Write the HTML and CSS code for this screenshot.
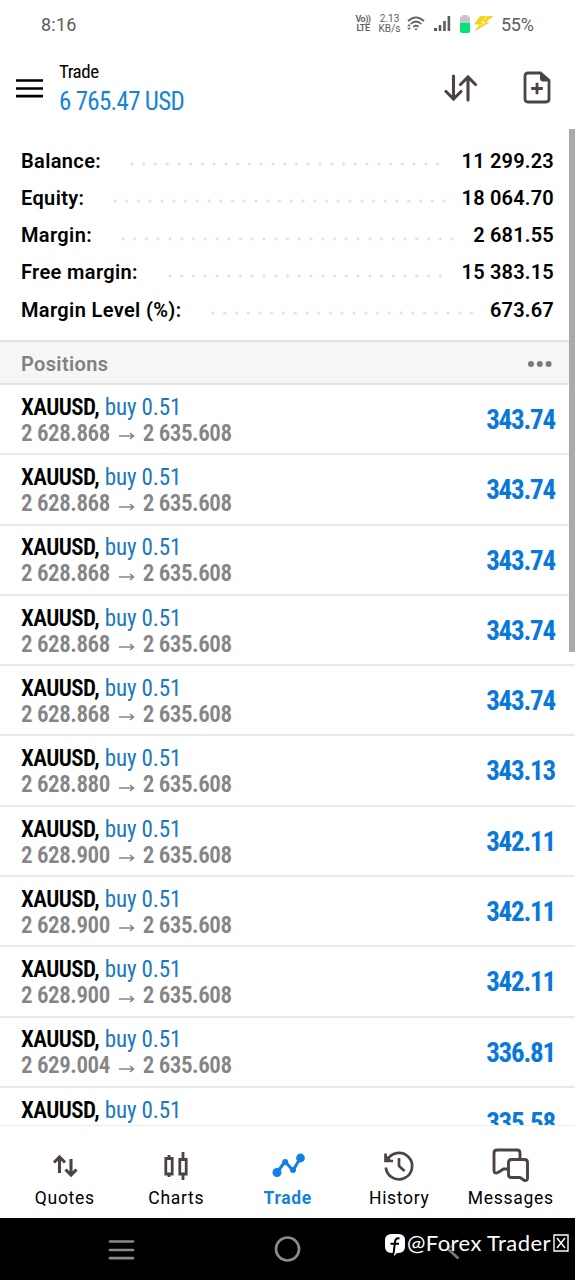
FILE: index.html
```
<!DOCTYPE html>
<html lang="en">
<head>
<meta charset="utf-8">
<title>Trade</title>
<link rel="stylesheet" href="styles.css">
</head>
<body>
<div class="screen">
  <div class="status">
    <span class="clock">8:16</span>
    <div class="status-icons">
      <span class="volte"><span>Vo))</span><span>LTE</span></span>
      <span class="speed"><span>2.13</span><span>KB/s</span></span>
      <svg class="wifi" width="18" height="16" viewBox="0 0 18 16" fill="none" stroke="#5c5c5c" stroke-width="1.7"><path d="M1 5.2Q9-2.6 17 5.2M3.7 8Q9 3 14.3 8M6.3 10.8Q9 8.400 11.7 10.8"/><path d="M7.3 12.6h3.4L9 14.6z" fill="#5c5c5c" stroke="none"/><path d="M.2 10.2L2 8l1.800 2.200zM.2 11.800L2 14l1.800-2.200z" fill="#5c5c5c" stroke="none"/></svg>
      <svg class="signal" width="17" height="16" viewBox="0 0 17 16" fill="#5c5c5c"><path d="M0 12h3v3H0zM4.700 9h2.600v6H4.700zM9.200 5h2.600v10H9.200zM13.600 0h2.600v15h-2.600z"/></svg>
      <svg class="battery" width="10" height="18" viewBox="0 0 10 18"><path d="M2.500 0h5v1.500H9Q10 1.500 10 3v12.500Q10 18 7.500 18h-5Q0 18 0 15.500V3q0-1.500 1-1.500h1.500z" fill="#c6c6c6"/><path d="M0 8h10v7.500Q10 18 7.500 18h-5Q0 18 0 15.500z" fill="#00e27a"/></svg>
      <svg class="bolt" width="20" height="16" viewBox="0 0 20 16"><path d="M6 0h13.500L12 6.200h4L0 15.800 5.500 8.500H0z" fill="#f3d321"/><path d="M12.500 0L7.500 6.500h3.500L6 10" stroke="#fff" stroke-width=".7" fill="none"/></svg>
      <span class="percent">55%</span>
    </div>
  </div>

  <header class="header">
    <svg class="menu" width="27" height="20" viewBox="0 0 27 20"><path d="M0 1.500h27M0 9.500h27M0 17.200h27" stroke="#000" stroke-width="2.700"/></svg>
    <div class="title"><span class="cond name">Trade</span><span class="cond profit">6 765.47 USD</span></div>
    <svg class="sort" width="34" height="28" viewBox="0 0 34 28" fill="none" stroke="#4d4442" stroke-width="3.100" stroke-linecap="round"><path d="M9.500 2v22M2 17.500l7.500 7.500 7.500-7.500M24 26V4M16.500 10.500L24 3l7.500 7.500"/></svg>
    <svg class="doc" width="28" height="34" viewBox="0 0 28 34" fill="none" stroke="#4d4442" stroke-width="2.800"><path d="M5 2h12.500L26 9.500V28q0 3-3 3H5q-3 0-3-3V5q0-3 3-3zM8.200 17.500h11.600M14 11.700v11.600"/><path d="M17 2v5.500q0 3 3 3h6z" fill="#4d4442" stroke="none"/></svg>
  </header>

  <main class="content">
    <section class="summary">
      <div class="sum balance"><span class="label">Balance:</span><i class="dots"></i><span class="value">11 299.23</span></div>
      <div class="sum equity"><span class="label">Equity:</span><i class="dots"></i><span class="value">18 064.70</span></div>
      <div class="sum margin"><span class="label">Margin:</span><i class="dots"></i><span class="value">2 681.55</span></div>
      <div class="sum free"><span class="label">Free margin:</span><i class="dots"></i><span class="value">15 383.15</span></div>
      <div class="sum level"><span class="label">Margin Level (%):</span><i class="dots"></i><span class="value">673.67</span></div>
    </section>
    <div class="section"><span>Positions</span><svg width="25" height="8" viewBox="0 0 25 8" fill="#7b7b7b"><circle cx="3" cy="4" r="3"/><circle cx="11.800" cy="4" r="3"/><circle cx="20.600" cy="4" r="3"/></svg></div>
    <section class="positions">
      <article class="row"><div class="info"><p class="cond symbol"><b>XAUUSD,</b> <span>buy 0.51</span></p><p class="cond prices"><span>2 628.868</span><svg class="arrow" viewBox="0 0 16 8"><path d="M0 4h14M11 1l3.500 3L11 7"/></svg><span>2 635.608</span></p></div><span class="cond gain">343.74</span></article>
      <article class="row"><div class="info"><p class="cond symbol"><b>XAUUSD,</b> <span>buy 0.51</span></p><p class="cond prices"><span>2 628.868</span><svg class="arrow" viewBox="0 0 16 8"><path d="M0 4h14M11 1l3.500 3L11 7"/></svg><span>2 635.608</span></p></div><span class="cond gain">343.74</span></article>
      <article class="row"><div class="info"><p class="cond symbol"><b>XAUUSD,</b> <span>buy 0.51</span></p><p class="cond prices"><span>2 628.868</span><svg class="arrow" viewBox="0 0 16 8"><path d="M0 4h14M11 1l3.500 3L11 7"/></svg><span>2 635.608</span></p></div><span class="cond gain">343.74</span></article>
      <article class="row"><div class="info"><p class="cond symbol"><b>XAUUSD,</b> <span>buy 0.51</span></p><p class="cond prices"><span>2 628.868</span><svg class="arrow" viewBox="0 0 16 8"><path d="M0 4h14M11 1l3.500 3L11 7"/></svg><span>2 635.608</span></p></div><span class="cond gain">343.74</span></article>
      <article class="row"><div class="info"><p class="cond symbol"><b>XAUUSD,</b> <span>buy 0.51</span></p><p class="cond prices"><span>2 628.868</span><svg class="arrow" viewBox="0 0 16 8"><path d="M0 4h14M11 1l3.500 3L11 7"/></svg><span>2 635.608</span></p></div><span class="cond gain">343.74</span></article>
      <article class="row"><div class="info"><p class="cond symbol"><b>XAUUSD,</b> <span>buy 0.51</span></p><p class="cond prices"><span>2 628.880</span><svg class="arrow" viewBox="0 0 16 8"><path d="M0 4h14M11 1l3.500 3L11 7"/></svg><span>2 635.608</span></p></div><span class="cond gain">343.13</span></article>
      <article class="row"><div class="info"><p class="cond symbol"><b>XAUUSD,</b> <span>buy 0.51</span></p><p class="cond prices"><span>2 628.900</span><svg class="arrow" viewBox="0 0 16 8"><path d="M0 4h14M11 1l3.500 3L11 7"/></svg><span>2 635.608</span></p></div><span class="cond gain">342.11</span></article>
      <article class="row"><div class="info"><p class="cond symbol"><b>XAUUSD,</b> <span>buy 0.51</span></p><p class="cond prices"><span>2 628.900</span><svg class="arrow" viewBox="0 0 16 8"><path d="M0 4h14M11 1l3.500 3L11 7"/></svg><span>2 635.608</span></p></div><span class="cond gain">342.11</span></article>
      <article class="row"><div class="info"><p class="cond symbol"><b>XAUUSD,</b> <span>buy 0.51</span></p><p class="cond prices"><span>2 628.900</span><svg class="arrow" viewBox="0 0 16 8"><path d="M0 4h14M11 1l3.500 3L11 7"/></svg><span>2 635.608</span></p></div><span class="cond gain">342.11</span></article>
      <article class="row"><div class="info"><p class="cond symbol"><b>XAUUSD,</b> <span>buy 0.51</span></p><p class="cond prices"><span>2 629.004</span><svg class="arrow" viewBox="0 0 16 8"><path d="M0 4h14M11 1l3.500 3L11 7"/></svg><span>2 635.608</span></p></div><span class="cond gain">336.81</span></article>
      <article class="row"><div class="info"><p class="cond symbol"><b>XAUUSD,</b> <span>buy 0.51</span></p></div><span class="cond gain">335.58</span></article>
    </section>
    <div class="scrollbar"></div>
  </main>

  <nav class="tabs">
    <a class="tab"><svg width="40" height="36" viewBox="0 0 40 36" fill="none" stroke="#4d4442" stroke-width="3.100"><path d="M14.500 26V11M9 15.500l5.500-5.500 5.500 5.500M26 12v15M20.500 22.500L26 28l5.500-5.500"/></svg><span>Quotes</span></a>
    <a class="tab"><svg width="40" height="36" viewBox="0 0 40 36" fill="none" stroke="#4d4442" stroke-width="2.800"><path d="M9.800 11.500h6.400v15.500H9.800zM13 8v3.500M13 27v3M23.800 12.500h6.400v14.500h-6.400zM27 5v7M27 27v6"/></svg><span>Charts</span></a>
    <a class="tab active"><svg width="40" height="36" viewBox="0 0 40 36" fill="none" stroke="#147fe5" stroke-width="3"><path d="M9 25.500L17 14.500l8 9 7-12" stroke-linejoin="round"/><g fill="#147fe5" stroke="none"><circle cx="9" cy="25.500" r="4.500"/><circle cx="17.200" cy="15" r="3"/><circle cx="25" cy="23" r="3"/><circle cx="32.500" cy="11" r="4.400"/></g></svg><span>Trade</span></a>
    <a class="tab"><svg width="40" height="36" viewBox="0 0 40 36" fill="none" stroke="#4d4442" stroke-width="2.700"><path d="M8 13.500A13.200 13.200 0 1 1 6.800 20.500M6.500 6.500v7.500h7.500M20 11v8l5.500 5"/><path d="M6 7l7 7H6z" fill="#4d4442" stroke="none"/></svg><span>History</span></a>
    <a class="tab"><svg width="40" height="36" viewBox="0 0 40 36" fill="none" stroke="#4d4442" stroke-width="2.900" stroke-linejoin="round"><path d="M16.500 22h-4l-5.500 3.500q-4 1.500-4-2V6q0-3 3-3h20q3 0 3 3v5"/><path d="M20.500 12.500h13q3 0 3 3V31q0 3-3 2.500L29 30.500h-8.500q-3 0-3-3v-12q0-3 3-3z"/></svg><span>Messages</span></a>
  </nav>
  <footer class="system">
    <svg width="575" height="62" viewBox="0 0 575 62" fill="none" stroke="#8a8a8a"><path d="M110 23.500h23M110 32h23M110 40.200h23" stroke-width="2.700" stroke-linecap="round"/><circle cx="287.500" cy="31" r="11.500" stroke-width="2.700"/><path d="M448 31l10.500 9.500" stroke="#777" stroke-width="2.700"/><path d="M459 22L448 31" stroke="#444" stroke-width="2"/></svg>
    <div class="credit"><svg width="20" height="22" viewBox="0 0 20 22"><path d="M6.500 0h7Q20 0 20 6.500v6q0 6.500-6.500 6.500H12l-3 3v-3H6.500Q0 19 0 12.500v-6Q0 0 6.500 0z" fill="#fff"/><path d="M14.500 4.500q-4-1-4.500 3.500L8.500 20M5.500 9.800h8.500" fill="none" stroke="#000" stroke-width="2"/></svg><span class="handle">@Forex Trader</span><svg class="tofu" width="16" height="18" viewBox="0 0 16 18" fill="none" stroke="#fff" stroke-width="1.400"><path d="M1 1h14v16H1zM4 4l8 10M12 4L4 14"/></svg></div>
  </footer>
</div>
</body>
</html>
```
FILE: styles.css
```
* { box-sizing: border-box; }
body { margin: 0; background: #fff; font-family: Roboto, "Liberation Sans", sans-serif; color: #000; }
p { margin: 0; }
svg { display: block; flex: none; }
.screen { width: 575px; height: 1280px; overflow: hidden; display: flex; flex-direction: column; }
.cond { font-family: "Roboto Condensed", Roboto, sans-serif; font-stretch: 75%; white-space: nowrap; }

.status { height: 48px; flex: none; display: flex; justify-content: space-between; padding-left: 41px; padding-right: 40px; color: #5c5c5c; }
.clock { font-size: 18px; line-height: 49px; letter-spacing: .2px; }
.status-icons { display: flex; align-items: flex-start; }
.volte, .speed { display: flex; flex-direction: column; align-items: center; font-size: 10px; line-height: 10px; }
.volte { width: 16px; padding-top: 15px; font-size: 9px; line-height: 8.500px; font-weight: 600; letter-spacing: -.5px; white-space: nowrap; }
.speed { margin-left: 7px; width: 23px; padding-top: 14px; }
.wifi { margin: 16px 0 0 6px; }
.signal { margin: 16px 0 0 9px; }
.battery { margin: 15px 0 0 9px; }
.bolt { margin: 16px 0 0 4px; }
.percent { font-size: 18px; line-height: 49px; margin-left: 7px; width: 34px; white-space: nowrap; letter-spacing: -.3px; }

.header { height: 80px; flex: none; display: flex; align-items: flex-start; padding-left: 16px; }
.menu { margin-top: 31px; }
.title { margin-left: 16px; width: 385px; display: flex; flex-direction: column; }
.name { font-size: 19px; line-height: 24px; margin-top: 12px; letter-spacing: -.5px; }
.profit { font-size: 25px; line-height: 30px; margin-top: 3px; letter-spacing: -.7px; color: #1584d6; }
.sort { margin-top: 26px; }
.doc { margin: 23px 0 0 45px; }

.content { position: relative; height: 998px; flex: none; overflow: hidden; border-bottom: 1px solid #eee; }
.summary { height: 212px; padding: 14.500px 21px 0; }
.sum { height: 37.250px; line-height: 37.250px; display: grid; font-size: 20px; font-weight: 600; white-space: nowrap; }
.label { letter-spacing: .36px; }
.value { text-align: right; letter-spacing: .2px; }
.dots { height: 4px; margin-top: 19.500px; background: radial-gradient(circle at 2px 2px, #e0e0e0 1px, transparent 2px) 0 0 / 11.750px 4px repeat-x; }
.balance { grid-template-columns: 108.500px 310px 1fr; }
.equity { grid-template-columns: 91.500px 333px 1fr; }
.margin { grid-template-columns: 99.700px 333px 1fr; }
.free { grid-template-columns: 147px 275px 1fr; }
.level { grid-template-columns: 190px 263px 1fr; }
.section { height: 45px; border-top: 2px solid #e3e3e3; border-bottom: 2px solid #e3e3e3; background: #f6f6f6; display: flex; align-items: center; justify-content: space-between; padding: 3px 22px 0 21px; font-size: 20px; font-weight: 600; letter-spacing: .35px; color: #808080; }
.row { height: 70.300px; border-bottom: 2px solid #e9e9e9; display: flex; justify-content: space-between; padding: 0 20px 0 21px; }
.info { padding-top: 9.800px; }
.symbol { font-size: 23px; line-height: 26px; color: #1878c0; }
.symbol b { color: #000; font-weight: 600; letter-spacing: -.55px; }
.symbol span { margin-left: .6px; letter-spacing: -.15px; }
.prices { display: flex; font-size: 23px; line-height: 26px; font-weight: 600; letter-spacing: -.45px; color: #858585; }
.arrow { width: 16px; height: 8px; margin: 11.500px 8px 0 9px; fill: none; stroke: #858585; stroke-width: 1.600; }
.gain { font-size: 27px; font-weight: 700; line-height: 71px; letter-spacing: -1.200px; color: #0878da; }
.scrollbar { position: absolute; right: 0; top: 1px; width: 6px; height: 523px; background: #aaa; }

.tabs { height: 92px; flex: none; display: grid; grid-template-columns: repeat(5, 111.500px); padding-left: 9px; }
.tab { display: flex; flex-direction: column; align-items: center; font-size: 17.500px; letter-spacing: .7px; padding-top: 21px; }
.tab span { line-height: 22px; margin-top: 4px; }
.active { color: #1584d6; font-weight: 700; }
.system { height: 62px; flex: none; background: #000; position: relative; }
.credit { position: absolute; left: 385px; top: 12px; display: flex; align-items: center; color: #fff; font-size: 22px; white-space: nowrap; }
.credit svg:first-child { margin-top: 3px; }
.handle { font-family: Lato, sans-serif; line-height: 26px; margin: 0 2px; letter-spacing: .4px; }
```
